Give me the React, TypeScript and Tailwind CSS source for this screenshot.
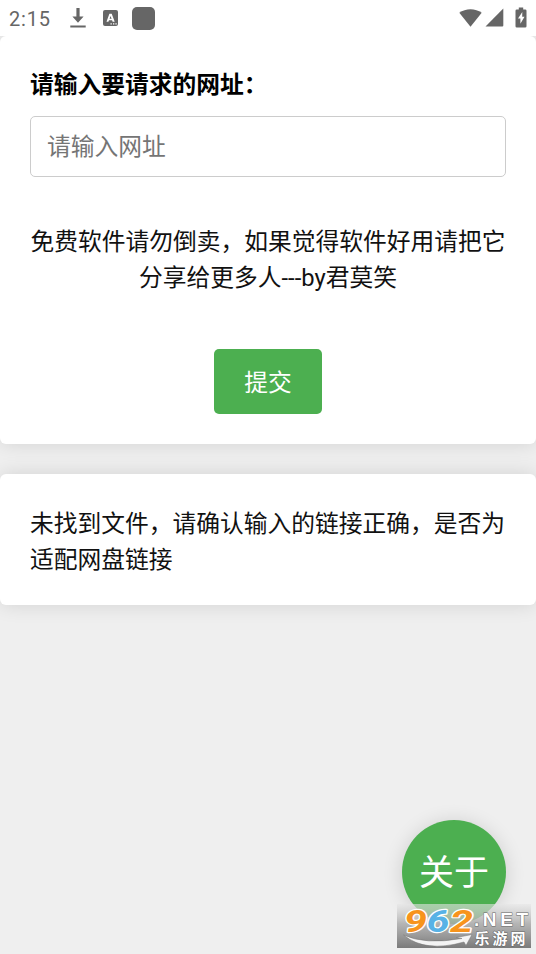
import { useState } from 'react';

const CARD = 'rounded-[6px] bg-white px-[30px] shadow-[0_0_20px_rgba(0,0,0,0.12)]';

function StatusBar() {
  return (
    <header className="relative z-10 flex h-9 items-center justify-between bg-white text-[#666666]">
      <div className="flex items-center pl-[9px]">
        <span className="w-[60px] pt-px text-[20px] leading-9 tracking-[0.8px]">2:15</span>
        <svg className="h-[22px] w-[18px]" viewBox="0 0 18 22" fill="currentColor">
          <path d="M7.4 1h3.2v8.5h4L9 15.8 3.4 9.500h4zM1.300 18.500h15.400v1.900H1.300z" />
        </svg>
        <div className="ml-[16px] flex h-[16px] w-[15px] justify-center rounded-[2px] bg-current">
          <svg className="h-[16px] w-[15px]" viewBox="0 0 15 16" fill="#ffffff">
            <path
              fillRule="evenodd"
              d="M6.400 3.800h2.300l3 8H9.600L9.100 10.300H6L5.400 11.800H3.500zM7.500 5.900 6.600 8.800h2z"
            />
            <path d="M7.500 13.300h1.300v1.200H7.500zM10 13.300h1.300v1.200H10zM12.400 13.300h1.300v1.200h-1.300z" />
          </svg>
        </div>
        <div className="ml-[14px] h-[23px] w-[23px] rounded-[5px] bg-current" />
      </div>
      <div className="flex items-center pr-[9px]">
        <svg className="mt-px h-[20px] w-[23px]" viewBox="0 0 23 20" fill="currentColor">
          <path d="M.3 3.800C6.500-.9 16.500-.9 22.700 3.800L11.500 17.800z" />
        </svg>
        <svg className="ml-[3px] h-[20px] w-[19px]" viewBox="0 0 19 20" fill="currentColor">
          <path d="M18.300 .600v16.900q0 1-1 1H.500z" />
        </svg>
        <svg className="-mt-[2px] ml-[11px] h-[21px] w-[12px]" viewBox="0 0 12 21" fill="currentColor">
          <path d="M3.800.500h4.400v2h2q1.300 0 1.300 1.300v15.400q0 1.300-1.300 1.300H1.800Q.5 20.500.5 19.200V3.800q0-1.300 1.300-1.300h2z" />
          <path d="M7.300 5 3 11.500h2.400v5.200L9.500 9.800H7.200z" fill="#ffffff" />
        </svg>
      </div>
    </header>
  );
}

function Watermark() {
  return (
    <svg
      className="absolute left-[397px] top-[904px] h-[44px] w-[134px] overflow-visible"
      viewBox="0 0 134 44"
    >
      <defs>
        <linearGradient id="plate" x1="0" y1="0" x2="0" y2="1">
          <stop offset="0" stopColor="#e6e6e6" stopOpacity="0.6" />
          <stop offset="0.45" stopColor="#aaaaaa" stopOpacity="0.85" />
          <stop offset="1" stopColor="#777777" stopOpacity="0.97" />
        </linearGradient>
      </defs>
      <rect width="134" height="44" fill="url(#plate)" />
      <path
        d="M6.500 31Q28 41 65 34.500L59.500 33.500 75 30.500 69 41.500 67 38Q28 49 6.500 31z"
        fill="#f4f4f4"
        stroke="#777777"
        strokeWidth="0.500"
      />
      <g
        className="font-[Roboto,'Liberation_Sans',sans-serif] font-bold italic [paint-order:stroke]"
        fontSize="32"
        stroke="#ffffff"
        strokeWidth="2.400"
        strokeLinejoin="round"
      >
        <text x="7" y="28" textLength="23" lengthAdjust="spacingAndGlyphs" fill="#f7941d">9</text>
        <text x="29.500" y="28" textLength="23" lengthAdjust="spacingAndGlyphs" fill="#58b2e6">6</text>
        <text x="53" y="28" textLength="23" lengthAdjust="spacingAndGlyphs" fill="#f7941d">2</text>
      </g>
      <g fill="#ffffff" stroke="#666666" strokeWidth="1" className="font-bold [paint-order:stroke]">
        <text
          x="77"
          y="22"
          fontSize="19"
          textLength="54"
          className="font-['Liberation_Sans',sans-serif]"
        >
          .NET
        </text>
        <text
          x="77.500"
          y="39.500"
          fontSize="15"
          textLength="51"
          className="font-['Noto_Sans_CJK_SC',sans-serif]"
        >
          乐游网
        </text>
      </g>
    </svg>
  );
}

export default function App() {
  const [url, setUrl] = useState('');

  return (
    <div className="relative h-[954px] w-[536px] overflow-hidden bg-[#efefef] font-[Roboto,'Noto_Sans_CJK_SC',sans-serif] text-[23.75px] leading-9 text-[#111111]">
      <StatusBar />

      <main className="flex flex-col gap-[30px]">
        <form className={`${CARD} h-[408px] pt-[31px]`} onSubmit={(e) => e.preventDefault()}>
          <label htmlFor="url" className="block font-bold text-black">
            请输入要请求的网址：
          </label>
          <input
            id="url"
            value={url}
            onChange={(e) => setUrl(e.target.value)}
            placeholder="请输入网址"
            className="mt-[13px] block h-[61px] w-full rounded-[5px] border border-[#cccccc] px-[16px] placeholder:text-[#757575] focus:outline-none"
          />
          <p className="-mx-1 mt-[47px] text-center">
            免费软件请勿倒卖，如果觉得软件好用请把它
            <br />
            分享给更多人---by君莫笑
          </p>
          <button
            type="submit"
            className="mx-auto mt-[53px] block h-[65px] w-[108px] rounded-[5px] bg-[#4caf50] pt-[3px] text-white"
          >
            提交
          </button>
        </form>

        <section className={`${CARD} h-[131px] pt-[32px]`}>
          <p className="-mr-1">
            未找到文件，请确认输入的链接正确，是否为
            <br />
            适配网盘链接
          </p>
        </section>
      </main>

      {/* Floating about button */}
      <button
        type="button"
        className="absolute left-[402px] top-[820px] h-[104px] w-[104px] rounded-full bg-[#4caf50] pt-[3px] text-[35px] text-white shadow-[0_2px_20px_rgba(0,0,0,0.14)]"
      >
        关于
      </button>
      <Watermark />
    </div>
  );
}
